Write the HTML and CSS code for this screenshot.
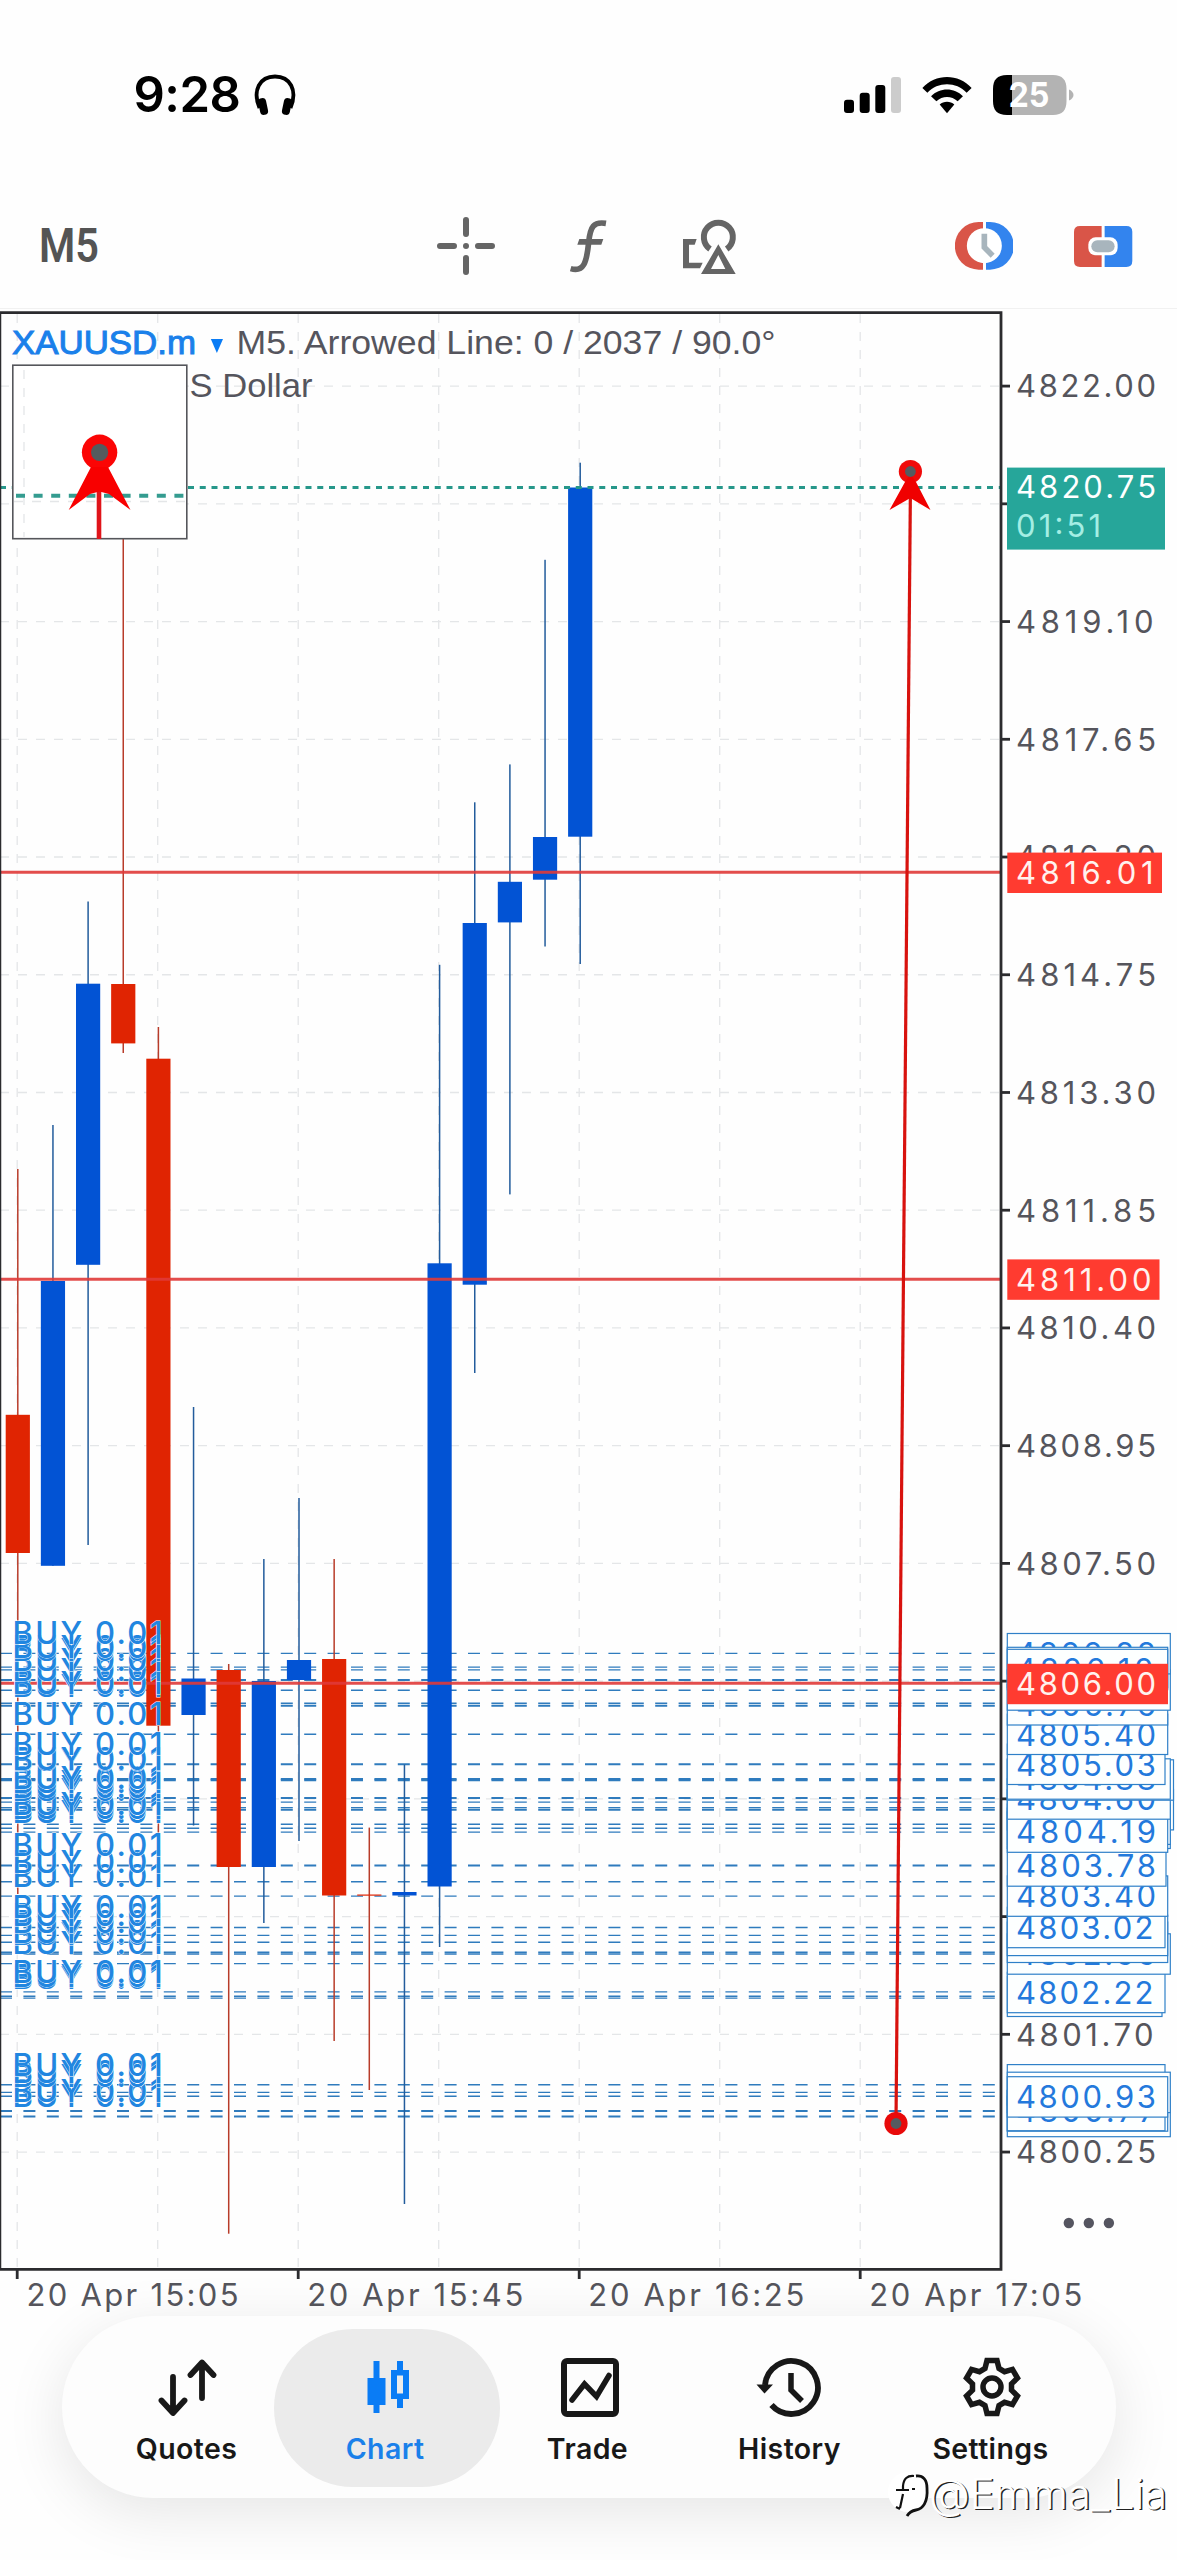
FILE: index.html
```
<!DOCTYPE html>
<html lang="en">
<head>
<meta charset="utf-8">
<title>XAUUSD.m M5</title>
<link rel="stylesheet" href="styles.css">
</head>
<body>
<div class="screen">
  <header class="status">
    <div class="status-left">
      <span class="time">9:28</span>
      <svg class="headphones" viewBox="0 0 42 42" width="42" height="42">
        <path d="M5.5 34C-2 16 6 2.500 21 2.500S44 16 36.500 34" fill="none" stroke="#000" stroke-width="3.800"/>
        <rect x="5" y="24" width="8" height="17" rx="3.800" transform="rotate(-12 9 32)"/>
        <rect x="29" y="24" width="8" height="17" rx="3.800" transform="rotate(12 33 32)"/>
      </svg>
    </div>
    <div class="status-right">
      <svg class="signal" viewBox="0 0 57 36" width="57" height="36">
        <rect x="0" y="22.700" width="10" height="13.300" rx="3"/>
        <rect x="15.700" y="15.700" width="10" height="20.300" rx="3"/>
        <rect x="31.300" y="8" width="10" height="28" rx="3"/>
        <rect x="47" y="0" width="10" height="36" rx="3" fill="#ccc"/>
      </svg>
      <svg class="wifi" viewBox="0 0 150 110" width="50" height="36.600">
        <path d="M1 33C40-11 110-11 149 33L134 47C102 13 48 13 16 47Z"/>
        <path d="M27 58C53 31 97 31 123 58L107 73C89 56 61 56 43 73Z"/>
        <path d="M53 83C65 72 85 72 97 83L75 109Z"/>
      </svg>
      <svg class="battery" viewBox="0 0 82 40" width="82" height="40">
        <path d="M19 0H14C4 0 0 5 0 14V26C0 35 4 40 14 40H19Z"/>
        <path d="M19 0H60C69.500 0 73.500 5 73.500 14V26C73.500 35 69.500 40 60 40H19Z" fill="#b3b3b3"/>
        <path d="M76 14.500C82 17 82 23 76 25.500Z" fill="#b3b3b3"/>
        <text x="15.500" y="32.400" textLength="41" lengthAdjust="spacingAndGlyphs" class="battery-text">25</text>
      </svg>
    </div>
  </header>

  <div class="toolbar">
    <svg class="timeframe" viewBox="0 0 64 60" width="64" height="60"><text x="0" y="46" textLength="60" lengthAdjust="spacingAndGlyphs" class="timeframe-text">M5</text></svg>
    <svg class="tool-cross" viewBox="0 0 60 60" width="60" height="60">
      <path d="M30 4V18M30 42V56M4 30H18M42 30H56" stroke="#656565" stroke-width="6" stroke-linecap="round"/>
      <circle cx="30" cy="30" r="3" fill="#656565"/>
    </svg>
    <svg class="tool-func" viewBox="444 90 118 162" width="39.300" height="54">
      <path d="M555 103C518 97 508 112 503 160C497 222 488 250 449 239" fill="none" stroke="#656565" stroke-width="17"/>
      <path d="M475 150H547L541 167H469Z" fill="#656565"/>
    </svg>
    <svg class="tool-shapes" viewBox="786 78 164 171" width="54.700" height="57">
      <path d="M870 171A43.500 43.500 0 1 1 920 171" fill="none" stroke="#656565" stroke-width="18"/>
      <path d="M895 157L947 246H843ZM895 189L873 231H916Z" fill="#656565" fill-rule="evenodd"/>
      <path d="M789 141H830L824 158H807V212H848L840 229H789Z" fill="#656565"/>
    </svg>
    <svg class="tool-clock" viewBox="403 487 176 143" width="58.700" height="47.700">
      <path d="M487 487H474A71.500 71.500 0 0 0 474 630H487Z" fill="#d95548"/>
      <path d="M496 487H508A71.500 71.500 0 0 1 508 630H496Z" fill="#3384ee"/>
      <circle cx="491" cy="558" r="52.500" fill="#fff"/>
      <path d="M491 522V563L516 588" fill="none" stroke="#a8b5bd" stroke-width="17"/>
    </svg>
    <svg class="tool-trade" viewBox="764 497 175 123" width="58.300" height="41">
      <path d="M847 497H782Q764 497 764 515V602Q764 620 782 620H847Z" fill="#d95548"/>
      <path d="M856 497H921Q939 497 939 515V602Q939 620 921 620H856Z" fill="#3384ee"/>
      <rect x="807" y="531" width="88" height="54" rx="22" fill="#fff"/>
      <rect x="816" y="540" width="70" height="36" rx="18" fill="#a8b5bd"/>
    </svg>
  </div>

  <main class="chart-area">
    <svg id="chart" class="chart" viewBox="0 309 1177 2007" width="1177" height="2007"></svg>
  </main>

  <nav class="tabs">
    <a class="tab">
      <svg viewBox="0 0 60 60" width="60" height="60"><path d="M16 20V55M4.500 43.500L16 56L27.500 43.500M45 41V6M33.500 18L45 5.500L56.500 18" fill="none" stroke="#181818" stroke-width="5.800" stroke-linecap="round" stroke-linejoin="round"/></svg>
      <span>Quotes</span>
    </a>
    <a class="tab active">
      <svg viewBox="0 0 60 60" width="60" height="60"><path d="M16.500 4H22.500V21H28.500V48H22.500V56H16.500V48H10.500V21H16.500ZM40 4H46V13H52V42H46V51H40V42H34V13H40ZM40 18.500V36.500H46V18.500Z" fill="#0a7cf5" fill-rule="evenodd"/></svg>
      <span>Chart</span>
    </a>
    <a class="tab trade">
      <svg viewBox="0 0 60 60" width="60" height="60"><rect x="4" y="4" width="52" height="53" rx="3" fill="none" stroke="#181818" stroke-width="6"/><path d="M12 43L24.500 27L36.500 39.500L49 18.500" fill="none" stroke="#181818" stroke-width="5.500" stroke-linecap="round"/></svg>
      <span>Trade</span>
    </a>
    <a class="tab">
      <svg class="wide-icon" viewBox="0 0 66 60" width="66" height="60"><path d="M10 28A26.500 26.500 0 1 1 16.500 48" fill="none" stroke="#181818" stroke-width="5.800"/><path d="M1.500 27.500H18L9.500 36.500Z" fill="#181818"/><path d="M36 16V33L47 44" fill="none" stroke="#181818" stroke-width="5.500"/></svg>
      <span>History</span>
    </a>
    <a class="tab">
      <svg class="gear" viewBox="-30 -30 60 60" width="60" height="60"><path d="M-5-26.500H5L7-18.500L12.500-15.300L20.450-17.600L25.450-8.900L19.500-3.200V3.200L25.450 8.900L20.450 17.600L12.500 15.300L7 18.500L5 26.500H-5L-7 18.500L-12.500 15.300L-20.450 17.600L-25.450 8.900L-19.500 3.200V-3.200L-25.450-8.900L-20.450-17.600L-12.500-15.300L-7-18.500Z" fill="none" stroke="#181818" stroke-width="5.500"/><circle r="9" fill="none" stroke="#181818" stroke-width="5.500"/></svg>
      <span>Settings</span>
    </a>
  </nav>

  <div class="watermark">
    <svg viewBox="0 0 46 50" width="46" height="50">
      <circle cx="21" cy="22" r="20" fill="#fff"/>
      <path d="M29 6C36 5 40 10 40 18C41 32 36 39 29 40Q23 41 20 46" fill="none" stroke="#111" stroke-width="2.800"/>
      <path d="M27 6Q17 5 16 16V19M9 20H22M16 24L13 38M9 37L13 39M25 19H28" fill="none" stroke="#111" stroke-width="2.200"/>
    </svg>
    <span>@Emma_Lia</span>
  </div>
</div>
<script src="chart.js"></script>
</body>
</html>
```
FILE: styles.css
```
* { box-sizing: border-box; }
body { margin: 0; background: #fff; font-family: Inter, "Liberation Sans", sans-serif; }
.screen { position: relative; width: 1177px; height: 2560px; overflow: hidden; display: flex; flex-direction: column; background: #fefefe; }
.status { height: 190px; padding: 0 101.700px 0 133.500px; display: flex; justify-content: space-between; align-items: center; }
.status-left, .status-right { display: flex; align-items: center; }
.time { font-size: 49px; font-weight: 600; letter-spacing: -0.5px; line-height: 60px; width: 120px; }
.status-right { gap: 21px; }
.wifi { margin-top: 1px; }
.battery-text { font-size: 34px; font-weight: 700; fill: #fff; }
.toolbar { height: 119px; padding: 0 44.500px 6px 39px; display: flex; align-items: center; border-bottom: 1px solid #f1f1f1; }
.timeframe { overflow: visible; }
.timeframe-text { font-family: Roboto, sans-serif; font-weight: 600; font-size: 49px; fill: #545454; }
.tool-cross { margin-left: 333px; }
.tool-func { margin-left: 73px; }
.tool-shapes { margin-left: 74px; }
.tool-clock { margin-left: auto; }
.tool-trade { margin-left: 61px; }
.chart-area { height: 2007px; }
.chart { display: block; }
.grid { stroke: #e4e6e8; stroke-width: 1.3; stroke-dasharray: 9 9; fill: none; }
.frame { stroke: #2b2b2e; stroke-width: 2.8; fill: none; }
.frame-left { stroke-width: 1.5; }
.price, .date, .order { font-family: Inter, sans-serif; font-size: 31px; fill: #55555c; }
.date { letter-spacing: 1px; }
.order { fill: #2186e0; stroke: #fff; stroke-width: 0.8px; paint-order: stroke; font-weight: 500; }
.title { font-family: "Liberation Sans", Arial, sans-serif; font-size: 34px; fill: #55555d; }
.symbol { fill: #1a80ea; stroke: #1a80ea; stroke-width: 1px; }
.up { fill: #0253d4; }
.down { fill: #e02402; }
.wick-up { fill: #235c9c; }
.wick-down { fill: #b83c2a; }
.level { stroke: #e03a38; stroke-opacity: 0.9; stroke-width: 3; }
.tag rect { fill: #fdffff; stroke: #2f80c8; stroke-width: 1.2; }
.tag .price { fill: #2379dc; }
.stop rect { fill: #ff3b30; stroke: none; }
.stop .price { fill: #fff2ee; }
.last rect { fill: #26a69a; }
.last .price { fill: #fff; }
.last .countdown { fill: #a4eee4; }
.tabs { width: 1054px; height: 182px; margin-left: 62px; padding: 0 24px; display: grid; grid-template-columns: repeat(5, 201px); background: #fdfdfd; border-radius: 91px; box-shadow: 0 14px 60px rgba(0, 0, 0, 0.1); }
.tab { height: 158px; margin-top: 12.500px; display: flex; flex-direction: column; align-items: center; color: #181818; font-size: 28.5px; font-weight: 600; letter-spacing: 0.4px; }
.tab svg { margin-top: 28px; }
.tab span { margin-top: 15.500px; line-height: 34px; white-space: nowrap; }
.tab.active { width: 226px; margin-left: -13px; border-radius: 79px; background: #ebebeb; color: #1a80ea; }
.tab.active span { margin-right: 4px; }
.tab.trade svg { margin-left: 2px; }
.tab.trade span { margin-right: 2px; }
.tab .wide-icon { margin-right: 3px; }
.tab .gear { margin-left: 2px; }
.watermark { position: absolute; left: 887px; top: 2470px; display: flex; align-items: center; }
.watermark svg { margin-right: -4px; }
.watermark span { font-size: 42px; line-height: 44px; margin-bottom: 3px; font-weight: 300; color: #fff; letter-spacing: -0.1px; text-shadow: 1.5px 1px 0.5px #222; }
```
FILE: chart.js
```
const NS = 'http://www.w3.org/2000/svg';
const chart = document.getElementById('chart');
function add(tag, attrs, text, parent) {
  const el = document.createElementNS(NS, tag);
  for (const key in attrs) el.setAttribute(key, attrs[key]);
  if (text) el.textContent = text;
  (parent || chart).appendChild(el);
  return el;
}
const TEXT_X = 1016;
function price(text, y, parent) {
  const narrow = /(10|70|01|22|02)$/.test(text) ? 2.5 : text === '4811.00' ? 4.5 : 0;
  add('text', { class: 'price', x: TEXT_X, y, textLength: 140 - narrow }, text, parent);
}

// grid
const rows = [];
for (let i = 0; i < 16; i++) rows.push(386.1 + 117.73 * i);
rows.forEach(y => add('path', { class: 'grid', d: `M0 ${y}H1000` }));
for (let i = 0; i < 7; i++) add('path', { class: 'grid', d: `M${17.2 + 140.5 * i} 314V2268` });

// order lines
const orders = [1653.4, 1667.1, 1669.9, 1679.9, 1690.2, 1703.3, 1705.7, 1734.3, 1764.3, 1779, 1780.2, 1798, 1802.1, 1807.6, 1809.7, 1824.2, 1828.3, 1832.1, 1865.5, 1881.7, 1896.1, 1927.5, 1935.4, 1942.3, 1952.3, 1954, 1963.6, 1991.9, 1996.3, 1998.1, 2084.8, 2092.4, 2096.2, 2111, 2116.5];
const heavy = [1679.9, 1764.3, 1779, 1780.2, 1865.5, 1798, 2111, 2116.5, 1705.7, 1809.7];
orders.forEach(y => add('path', { d: `M0 ${y}H1000`, stroke: '#2f7bbd', 'stroke-width': heavy.includes(y) ? 2 : 1.4, 'stroke-dasharray': '12 11.4' }));

// candles: direction, high, body top, body bottom, low
const candles = [
  ['down', 1169, 1414.8, 1553, 1894], ['up', 1125, 1281, 1565.8, 1565.8], ['up', 901.5, 983.7, 1264.8, 1545],
  ['down', 500, 984, 1043.4, 1053], ['down', 1027, 1058.7, 1725.7, 1836], ['up', 1407, 1678.5, 1715, 1825.5],
  ['down', 1664, 1670, 1867, 2233.7], ['up', 1559, 1681, 1867, 1923], ['up', 1498, 1660, 1680, 1841],
  ['down', 1559, 1659, 1895.5, 2041], ['down', 1827.6, 1894.5, 1895.7, 2090], ['up', 1764.6, 1892, 1895.5, 2204],
  ['up', 964.8, 1263.3, 1886.5, 1947], ['up', 802.3, 923, 1284.7, 1373], ['up', 764.4, 881.8, 922.4, 1194.4],
  ['up', 559.8, 837, 879.7, 946.5], ['up', 462.7, 487.5, 836.7, 964]
];
candles.forEach(([dir, high, top, bottom, low], i) => {
  const x = 17.8 + 35.15 * i;
  add('rect', { class: 'wick-' + dir, x: x - 0.75, y: high, width: 1.5, height: low - high });
  add('rect', { class: dir, x: x - 12.1, y: top, width: 24.2, height: bottom - top });
});

// last price and stop levels
add('path', { d: 'M0 487.500H1000', stroke: '#26978a', 'stroke-width': 3, 'stroke-dasharray': '6 5.75' });
[872.2, 1279.3, 1683.3].forEach(y => add('path', { class: 'level', d: `M0 ${y}H1000` }));
orders.slice().reverse().forEach(y => add('text', { class: 'order', x: 12.5, y: y - 9.2, textLength: 150 }, 'BUY 0.01'));

// frame and ticks
add('path', { class: 'frame', d: 'M0 312.700H1001V2269.300H0' });
add('path', { class: 'frame frame-left', d: 'M0.500 312V2270' });
rows.forEach(y => add('path', { class: 'frame', d: `M1001 ${y}H1010` }));
[17.2, 298.2, 579.2, 860.2].forEach(x => add('path', { class: 'frame', d: `M${x} 2269V2279` }));
[['20 Apr 15:05', 26.5, 213], ['20 Apr 15:45', 307.3, 217], ['20 Apr 16:25', 588.3, 217], ['20 Apr 17:05', 869.3, 214]]
  .forEach(([t, x, w]) => add('text', { class: 'date', x, y: 2306, textLength: w }, t));

// axis prices
rows.forEach((y, i) => {
  if ([1, 11, 12, 13].includes(i)) return;
  price((4822 - 1.45 * i).toFixed(2), y + 11.3);
});

function tag(center, right, text, kind) {
  const g = add('g', { class: kind || 'tag' });
  add('rect', { x: 1007.3, y: center - 20.2, width: right - 1007.3, height: 40.4 }, '', g);
  if (text) price(text, center + 11.2, g);
}
[[2116.5, 1170.3], [2111, 1167.7], [2110.5, 1165, '4800.77'], [2084.8, 1165, '4801.07'], [2092.4, 1170.3], [2096.9, 1167.7, '4800.93'],
 [1996.3, 1162], [1992.5, 1165, '4802.22'], [1954, 1170.3, '4802.66'], [1942.3, 1167.7], [1935.4, 1167.7], [1927.5, 1165, '4803.02'],
 [1896.1, 1167.7, '4803.40'], [1866, 1166, '4803.78'], [1809.7, 1173.5], [1828.3, 1170.3], [1824.2, 1170.3], [1832.1, 1167.7, '4804.19'],
 [1799, 1170.3, '4804.60'], [1780, 1173.5], [1779, 1170.3, '4804.88'], [1764.3, 1165, '4805.03'], [1734.3, 1167.7, '4805.40'],
 [1704.8, 1167.7, '4805.76'], [1690, 1170.3], [1653.7, 1170.3, '4806.28'], [1667.5, 1167.7], [1669.5, 1167.7, '4806.10']
].forEach(t => tag(...t));
tag(872.8, 1162, '4816.01', 'stop');
tag(1279.6, 1159.5, '4811.00', 'stop');
tag(1684, 1168, '4806.00', 'stop');
const last = add('g', { class: 'last' });
add('rect', { x: 1007, y: 467.6, width: 158, height: 82 }, '', last);
price('4820.75', 498.3, last);
add('text', { class: 'price countdown', x: TEXT_X, y: 536.5, textLength: 85 }, '01:51', last);

// arrowed line
add('path', { d: 'M910.500 480L896 2123', stroke: '#d8120e', 'stroke-width': 3.2 });
add('circle', { cx: 910.4, cy: 471.5, r: 11.6, fill: '#f00a0a' });
add('path', { d: 'M910.400 474L905 482L889.500 510L910.400 498L930.500 510L916 482Z', fill: '#f00000' });
add('circle', { cx: 910.4, cy: 471.5, r: 5.4, fill: '#555b60' });
add('circle', { cx: 896, cy: 2123.5, r: 11.6, fill: '#e80a0a' });
add('circle', { cx: 896, cy: 2123.5, r: 5.4, fill: '#555b60' });

// title
add('text', { class: 'title symbol', x: 12, y: 354.3, textLength: 184, lengthAdjust: 'spacingAndGlyphs' }, 'XAUUSD.m');
add('path', { d: 'M210.800 339H223L216.900 353Z', fill: '#0a7cf5' });
add('text', { class: 'title', x: 236.5, y: 354.3, textLength: 539, lengthAdjust: 'spacingAndGlyphs' }, 'M5. Arrowed Line: 0 / 2037 / 90.0°');
add('text', { class: 'title', x: 189.5, y: 397.3, textLength: 123, lengthAdjust: 'spacingAndGlyphs' }, 'S Dollar');

// magnifier
add('rect', { x: 12.8, y: 365.2, width: 174, height: 173.5, fill: '#fff', stroke: '#55565b', 'stroke-width': 1.6 });
add('path', { class: 'grid', d: 'M24 370V537M14 501.500H186' });
add('path', { d: 'M16 495.700H184', stroke: '#349c90', 'stroke-width': 4, 'stroke-dasharray': '9 8.6' });
add('path', { d: 'M99 480V539', stroke: '#e0141a', 'stroke-width': 4.6 });
add('circle', { cx: 99.6, cy: 452.3, r: 17.7, fill: '#fb0505' });
add('path', { d: 'M91 467H108L130.500 510L109 494L99.500 491.500L90 494L68.700 510Z', fill: '#f80000' });
add('circle', { cx: 99.6, cy: 452.3, r: 8.6, fill: '#555b5e' });

// more
[1068.8, 1088.8, 1108.9].forEach(cx => add('circle', { cx, cy: 2223, r: 5.2, fill: '#555560' }));
```
